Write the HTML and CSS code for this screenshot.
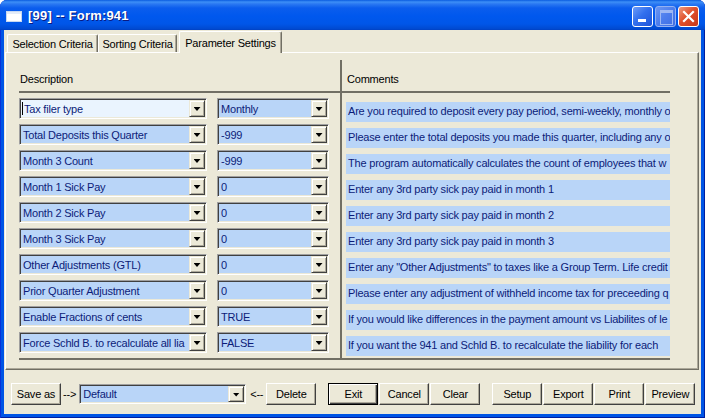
FILE: index.html
```html
<!DOCTYPE html>
<html lang="en">
<head>
  <meta charset="UTF-8">
  <title>[99] -- Form:941</title>
  <link rel="stylesheet" href="styles.css">
</head>
<body>
<div class="window">
  <div class="titlebar">
    <svg class="app-icon" width="16" height="16" viewBox="0 0 16 16">
      <rect x="0.5" y="3.5" width="15" height="10" fill="#fff" stroke="#c8d8f0"/>
      <rect x="1" y="4" width="14" height="2" fill="#e4ecf8"/>
    </svg>
    <span class="title">[99] -- Form:941</span>
    <div class="caption-btns">
      <span class="cap min"></span>
      <span class="cap max"></span>
      <span class="cap close">
        <svg width="19" height="19" viewBox="0 0 19 19"><path d="M5 5 L14 14 M14 5 L5 14" stroke="#fff" stroke-width="2.2" stroke-linecap="square"/></svg>
      </span>
    </div>
  </div>

  <div class="client">
    <div class="tabs">
      <div class="tab t1">Selection Criteria</div>
      <div class="tab t2">Sorting Criteria</div>
      <div class="tab active">Parameter Settings</div>
    </div>

    <div class="panel">
      <div class="grid">
        <div class="hd">Description</div>
        <div class="vsep"></div>
        <div class="hd hd-com">Comments</div>
        <div class="hline"></div>

        <div class="params">
          <div class="prow">
            <div class="combo wide"><div class="combo-text focus"><span class="caret"></span>Tax filer type</div><div class="combo-btn"></div></div>
            <div class="combo narrow"><div class="combo-text">Monthly</div><div class="combo-btn"></div></div>
          </div>
          <div class="prow">
            <div class="combo wide"><div class="combo-text">Total Deposits this Quarter</div><div class="combo-btn"></div></div>
            <div class="combo narrow"><div class="combo-text">-999</div><div class="combo-btn"></div></div>
          </div>
          <div class="prow">
            <div class="combo wide"><div class="combo-text">Month 3 Count</div><div class="combo-btn"></div></div>
            <div class="combo narrow"><div class="combo-text">-999</div><div class="combo-btn"></div></div>
          </div>
          <div class="prow">
            <div class="combo wide"><div class="combo-text">Month 1 Sick Pay</div><div class="combo-btn"></div></div>
            <div class="combo narrow"><div class="combo-text">0</div><div class="combo-btn"></div></div>
          </div>
          <div class="prow">
            <div class="combo wide"><div class="combo-text">Month 2 Sick Pay</div><div class="combo-btn"></div></div>
            <div class="combo narrow"><div class="combo-text">0</div><div class="combo-btn"></div></div>
          </div>
          <div class="prow">
            <div class="combo wide"><div class="combo-text">Month 3 Sick Pay</div><div class="combo-btn"></div></div>
            <div class="combo narrow"><div class="combo-text">0</div><div class="combo-btn"></div></div>
          </div>
          <div class="prow">
            <div class="combo wide"><div class="combo-text">Other Adjustments (GTL)</div><div class="combo-btn"></div></div>
            <div class="combo narrow"><div class="combo-text">0</div><div class="combo-btn"></div></div>
          </div>
          <div class="prow">
            <div class="combo wide"><div class="combo-text">Prior Quarter Adjustment</div><div class="combo-btn"></div></div>
            <div class="combo narrow"><div class="combo-text">0</div><div class="combo-btn"></div></div>
          </div>
          <div class="prow">
            <div class="combo wide"><div class="combo-text">Enable Fractions of cents</div><div class="combo-btn"></div></div>
            <div class="combo narrow"><div class="combo-text">TRUE</div><div class="combo-btn"></div></div>
          </div>
          <div class="prow">
            <div class="combo wide"><div class="combo-text">Force Schld B. to recalculate all lia</div><div class="combo-btn"></div></div>
            <div class="combo narrow"><div class="combo-text">FALSE</div><div class="combo-btn"></div></div>
          </div>
        </div>

        <div class="comments">
          <div class="comment">Are you required to deposit every pay period, semi-weekly, monthly o</div>
          <div class="comment">Please enter the total deposits you made this quarter, including any o</div>
          <div class="comment">The program automatically calculates the count of employees that w</div>
          <div class="comment">Enter any 3rd party sick pay paid in month 1</div>
          <div class="comment">Enter any 3rd party sick pay paid in month 2</div>
          <div class="comment">Enter any 3rd party sick pay paid in month 3</div>
          <div class="comment">Enter any "Other Adjustments" to taxes like a Group Term. Life credit</div>
          <div class="comment">Please enter any adjustment of withheld income tax for preceeding q</div>
          <div class="comment">If you would like differences in the payment amount vs Liabilites of le</div>
          <div class="comment">If you want the 941 and Schld B. to recalculate the liability for each</div>
        </div>

        <div class="hline bottom"></div>
      </div>
    </div>

    <div class="footer">
      <button class="btn">Save as</button>
      <span class="arrow-lbl">--&gt;</span>
      <div class="combo preset"><div class="combo-text">Default</div><div class="combo-btn"></div></div>
      <span class="arrow-lbl">&lt;--</span>
      <button class="btn">Delete</button>
      <button class="btn default gap">Exit</button>
      <button class="btn">Cancel</button>
      <button class="btn">Clear</button>
      <button class="btn gap">Setup</button>
      <button class="btn">Export</button>
      <button class="btn">Print</button>
      <button class="btn">Preview</button>
    </div>
  </div>
</div>
</body>
</html>
```

FILE: styles.css
```css
* {
  margin: 0;
  padding: 0;
  box-sizing: border-box;
}
body {
  width: 705px;
  height: 418px;
  overflow: hidden;
  background: #fff;
  font-family: "Liberation Sans", Arial, sans-serif;
  font-size: 11px;
  letter-spacing: -0.2px;
  color: #000;
}
.window {
  width: 705px;
  height: 418px;
  display: flex;
  flex-direction: column;
  background: #0055e5;
  border-radius: 7px 7px 0 0;
  box-shadow: inset 1px 0 #0831d9, inset -1px 0 #001ea0, inset 0 -1px #001ea0;
  overflow: hidden;
}

/* title bar */
.titlebar {
  height: 30px;
  flex: none;
  display: flex;
  align-items: center;
  padding: 0 6px 0 6px;
  background: linear-gradient(#0a5ce0 0, #3d8ff7 2px, #2a78f2 4px, #0b5ded 8px, #0058ee 16px, #0056e8 24px, #0049d0 29px, #003fc0 30px);
}
.app-icon {
  flex: none;
  margin: 1px 6px 0 0;
}
.title {
  flex: 1;
  color: #fff;
  font-weight: bold;
  font-size: 13px;
  letter-spacing: 0.2px;
  text-shadow: 1px 1px #0a1a80;
  margin-top: 1px;
}
.caption-btns {
  display: flex;
  gap: 2px;
  margin-top: 3px;
}
.cap {
  position: relative;
  width: 21px;
  height: 21px;
  border: 1px solid #fff;
  border-radius: 3px;
}
.cap.min {
  background: linear-gradient(135deg, #6d9cf8 0, #3270ee 45%, #1d52d8 100%);
}
.cap.min::after {
  content: "";
  position: absolute;
  left: 5px;
  bottom: 4px;
  width: 8px;
  height: 3px;
  background: #fff;
}
.cap.max {
  border-color: #93b1f2;
  background: linear-gradient(135deg, #6b96f2 0, #4c7ded 50%, #3e6de2 100%);
}
.cap.max::after {
  content: "";
  position: absolute;
  left: 4px;
  top: 3px;
  width: 11px;
  height: 11px;
  border: 1px solid #9db8f4;
  border-top-width: 3px;
}
.cap.close {
  background: linear-gradient(135deg, #ee9b80 0, #e0502c 45%, #c8381a 100%);
}
.cap.close svg {
  display: block;
}

/* client area */
.client {
  flex: 1;
  display: flex;
  flex-direction: column;
  margin: 0 4px 4px 4px;
  background: #ece9d8;
}
.tabs {
  height: 22px;
  flex: none;
  display: flex;
  align-items: flex-end;
  padding-left: 3px;
}
.tab {
  height: 18px;
  padding-top: 1px;
  line-height: 16px;
  text-align: center;
  border: 1px solid;
  border-color: #fff #716f64 transparent #fff;
  border-bottom: none;
  border-radius: 2px 2px 0 0;
  box-shadow: inset -1px 0 #aca899;
  background: #ece9d8;
}
.t1 { width: 91px; }
.t2 { width: 79px; }
.tab.active {
  position: relative;
  z-index: 1;
  width: 103px;
  height: 22px;
  margin: 0 0 -1px 2px;
  padding-top: 3px;
  line-height: 16px;
}
.panel {
  flex: none;
  height: 318px;
  margin: 0 2px 0 1px;
  border: 1px solid;
  border-color: #fff #716f64 #716f64 #fff;
  box-shadow: inset -1px -1px #aca899;
  padding: 7px 0 0 13px;
}

/* parameter grid */
.grid {
  display: grid;
  grid-template-columns: 321px 2px 328px;
  grid-template-rows: 31px 2px 265px 2px;
}
.hd {
  align-self: end;
  padding: 0 0 6px 1px;
}
.hd-com {
  grid-column: 3;
  grid-row: 1;
  padding-left: 5px;
}
.vsep {
  grid-column: 2;
  grid-row: 1 / 5;
  background: #716f64;
}
.hline {
  grid-column: 1 / 4;
  grid-row: 2;
  background: #716f64;
}
.hline.bottom {
  grid-row: 4;
}
.params {
  grid-column: 1;
  grid-row: 3;
  padding-top: 5px;
  display: flex;
  flex-direction: column;
  gap: 5px;
}
.prow {
  display: flex;
  gap: 10px;
  height: 21px;
}
.comments {
  grid-column: 3;
  grid-row: 3;
  padding: 9px 0 0 4px;
  display: flex;
  flex-direction: column;
  gap: 6px;
}
.comment {
  height: 20px;
  padding-left: 2px;
  line-height: 18px;
  white-space: nowrap;
  overflow: hidden;
  background: #b9d5f8;
  color: #0c1c78;
}

/* combo boxes */
.combo {
  display: flex;
  height: 21px;
  padding: 1px;
  border: 1px solid;
  border-color: #a0a0a0 #fff #fff #a0a0a0;
  box-shadow: inset 1px 1px #404040, inset -1px -1px #ece9d8;
}
.combo.wide { width: 188px; }
.combo.narrow { width: 112px; }
.combo-text {
  flex: 1;
  display: flex;
  align-items: center;
  padding-left: 2px;
  white-space: nowrap;
  overflow: hidden;
  background: #b9d5f8;
  color: #0c1c78;
}
.combo-text.focus {
  background: #eaf4fe;
  padding-left: 1px;
}
.caret {
  width: 1px;
  height: 13px;
  background: #000;
  margin-right: 1px;
}
.combo-btn {
  flex: none;
  width: 16px;
  display: flex;
  align-items: center;
  justify-content: center;
  border: 1px solid;
  border-color: #ece9d8 #404040 #404040 #ece9d8;
  box-shadow: inset 1px 1px #fff, inset -1px -1px #aca899;
  background: #ece9d8;
}
.combo-btn::after {
  content: "";
  width: 7px;
  height: 4px;
  margin-top: 1px;
  background: #000;
  clip-path: polygon(0 0, 100% 0, 50% 100%);
}

/* footer */
.footer {
  flex: 1;
  display: flex;
  align-items: flex-start;
  padding: 13px 0 0 7px;
}
.btn {
  width: 50px;
  height: 22px;
  margin-left: 1px;
  border: 1px solid;
  border-color: #fff #404040 #404040 #fff;
  box-shadow: inset -1px -1px #aca899;
  background: #ece9d8;
  font: inherit;
  letter-spacing: inherit;
  color: #000;
  text-align: center;
}
.btn:first-child {
  margin-left: 0;
}
.btn.gap {
  margin-left: 12px;
}
.btn.default {
  border-color: #000;
  box-shadow: inset 1px 1px #fff, inset -1px -1px #404040, inset -2px -2px #aca899;
}
.arrow-lbl {
  line-height: 22px;
  margin: 0 2px 0 2px;
}
.combo.preset {
  width: 167px;
  height: 20px;
  margin: 1px 2px 0 1px;
}
```
